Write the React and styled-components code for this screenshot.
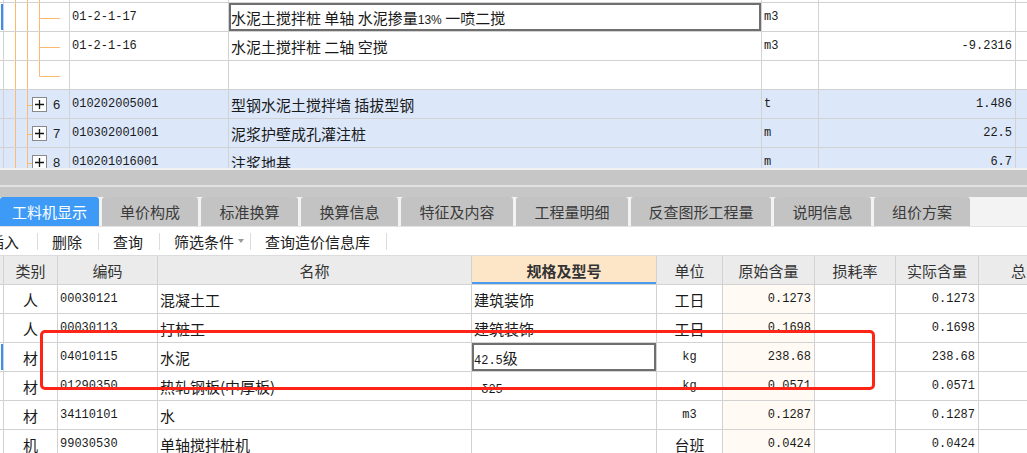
import React from "react";
import styled, { createGlobalStyle } from "styled-components";

const Global = createGlobalStyle`
  html, body { margin: 0; padding: 0; background: #fff; overflow: hidden; }
  body { font-family: "Noto Sans CJK SC", "Liberation Sans", sans-serif; }
`;

const CJK = `"Noto Sans CJK SC", "Liberation Sans", sans-serif`;
const SANS = `"Liberation Sans", "Noto Sans CJK SC", sans-serif`;
const MONO = `"Liberation Mono", "Noto Sans CJK SC", monospace`;
const LINE = "#d2d2d2";

const Page = styled.div`
  width: 1027px;
  height: 453px;
  overflow: hidden;
  position: relative;
  display: flex;
  flex-direction: column;
  background: #fff;
`;

/* ---------- top grid ---------- */
const TopGrid = styled.div`
  height: 168px;
  overflow: hidden;
  flex: none;
`;

const Row = styled.div`
  display: flex;
  height: ${(p) => p.$h}px;
  box-sizing: border-box;
  border-bottom: 1px solid ${LINE};
  background: ${(p) => (p.$blue ? "#dce8fa" : "#fff")};
  overflow: hidden;
  flex: none;
`;

const Cell = styled.div`
  position: relative;
  flex: none;
  width: ${(p) => p.$w}px;
  box-sizing: border-box;
  border-right: 1px solid ${(p) => (p.$noBorder ? "transparent" : LINE)};
  display: flex;
  align-items: center;
  justify-content: ${(p) =>
    p.$align === "right" ? "flex-end" : p.$align === "center" ? "center" : "flex-start"};
  padding: 0 ${(p) => (p.$align === "right" ? 3 : 0)}px 0 ${(p) => (p.$align === "left" ? 2 : 0)}px;
  white-space: pre;
  overflow: hidden;
  color: #1a1a1a;
  font-family: ${(p) => (p.$font === "mono" ? MONO : p.$font === "sans" ? SANS : CJK)};
  font-size: ${(p) => p.$size || 15}px;
  background: ${(p) => p.$bg || "transparent"};
  box-shadow: ${(p) => (p.$selected ? "inset 0 0 0 2px #6f6f6f" : "none")};
`;

const Marker = styled.div`
  flex: none;
  width: 4px;
  box-sizing: border-box;
  border-right: 1px solid ${LINE};
  display: flex;
  align-items: stretch;
  padding: 1px 0;
  &::before {
    content: "";
    display: ${(p) => (p.$on ? "block" : "none")};
    width: 2px;
    margin-left: 1px;
    background: #3a8ef0;
  }
`;

const TreeSvg = styled.svg`
  position: absolute;
  left: 0;
  top: 0;
`;

const TreeContent = styled.div`
  position: relative;
  display: flex;
  align-items: center;
  gap: 6px;
  padding-left: 28px;
  font-family: ${SANS};
  font-size: 13px;
  color: #222;
`;

const PlusBox = styled.span`
  width: 15px;
  height: 15px;
  box-sizing: border-box;
  border: 1px solid #8a8a8a;
  background: #fff;
  display: inline-flex;
  align-items: center;
  justify-content: center;
`;

const Small = styled.span`
  font-size: 12px;
  font-family: ${SANS};
`;

const Num = styled.span`
  font-family: ${MONO};
  font-size: 12px;
`;

const ORANGE = "#fbba70";

function Tree({ kind, h }) {
  const mid = Math.round(h / 2) + 0.5;
  return (
    <TreeSvg width="65" height={h} viewBox={`0 0 65 ${h}`}>
      <line x1="11.5" y1="0" x2="11.5" y2={h} stroke={ORANGE} strokeWidth="1" />
      <line x1="23.5" y1="0" x2="23.5" y2={h} stroke={ORANGE} strokeWidth="1" />
      {kind === "child" && (
        <>
          <line x1="35.5" y1="0" x2="35.5" y2={h} stroke={ORANGE} strokeWidth="1" />
          <line x1="35.5" y1={mid} x2="56" y2={mid} stroke={ORANGE} strokeWidth="1" />
        </>
      )}
      {kind === "last" && (
        <>
          <line x1="35.5" y1="0" x2="35.5" y2={mid} stroke={ORANGE} strokeWidth="1" />
          <line x1="35.5" y1={mid} x2="56" y2={mid} stroke={ORANGE} strokeWidth="1" />
        </>
      )}
      {kind === "top" && <line x1="35.5" y1="0" x2="35.5" y2={h} stroke={ORANGE} strokeWidth="1" />}
      {kind === "node" && <line x1="23.5" y1={mid} x2="28" y2={mid} stroke={ORANGE} strokeWidth="1" />}
    </TreeSvg>
  );
}

function Plus() {
  return (
    <PlusBox>
      <svg width="11" height="11" viewBox="0 0 11 11">
        <path d="M5.5 1v9M1 5.5h9" stroke="#111" strokeWidth="1.3" />
      </svg>
    </PlusBox>
  );
}

const topRows = [
  { h: 3, kind: "top" },
  { h: 29, kind: "child", code: "01-2-1-17", name: "水泥土搅拌桩 单轴 水泥掺量", pct: "13%", tail: " 一喷二搅", unit: "m3", qty: "", selected: true, mark: true },
  { h: 29, kind: "child", code: "01-2-1-16", name: "水泥土搅拌桩 二轴 空搅", unit: "m3", qty: "-9.2316" },
  { h: 29, kind: "last", code: "", name: "", unit: "", qty: "" },
  { h: 29, kind: "node", blue: true, num: "6", code: "010202005001", name: "型钢水泥土搅拌墙 插拔型钢", unit: "t", qty: "1.486" },
  { h: 29, kind: "node", blue: true, num: "7", code: "010302001001", name: "泥浆护壁成孔灌注桩", unit: "m", qty: "22.5" },
  { h: 29, kind: "node", blue: true, num: "8", code: "010201016001", name: "注浆地基", unit: "m", qty: "6.7" },
];

/* ---------- bottom panel ---------- */
const Splitter = styled.div`
  flex: none;
  height: 29px;
  box-sizing: border-box;
  border-top: 2px solid #f2f2f2;
  background: linear-gradient(#c6c6c6 0 15px, #e2e2e2 15px 17px, #c6c6c6 17px);
`;

const TabBar = styled.div`
  flex: none;
  height: 30px;
  display: flex;
  gap: 3px;
  background: #f3f3f3;
  border-bottom: 1px solid #e2e2e2;
  box-sizing: border-box;
`;

const Tab = styled.div`
  flex: none;
  width: ${(p) => p.$w}px;
  display: flex;
  align-items: center;
  justify-content: center;
  border-radius: 3px 3px 0 0;
  background: ${(p) => (p.$active ? "#3d9bf7" : "#c3c3c3")};
  color: ${(p) => (p.$active ? "#fff" : "#3a3a3a")};
  font-family: ${CJK};
  font-size: 15px;
`;

const Toolbar = styled.div`
  flex: none;
  height: 28px;
  display: flex;
  align-items: center;
  font-family: ${CJK};
  font-size: 15px;
  color: #222;
  background: #fff;
`;

const ToolItem = styled.span`
  display: inline-flex;
  align-items: center;
  gap: 4px;
  padding: 0 ${(p) => p.$pr ?? 16}px 0 ${(p) => p.$pl ?? 14}px;
  margin-left: ${(p) => p.$offset || 0}px;
`;

const Sep = styled.span`
  width: 1px;
  height: 17px;
  background: #dcdcdc;
`;

const Caret = styled.span`
  width: 0;
  height: 0;
  border-left: 3px solid transparent;
  border-right: 3px solid transparent;
  border-top: 4px solid #9a9a9a;
`;

const HeadRow = styled.div`
  flex: none;
  display: flex;
  height: 30px;
  box-sizing: border-box;
  border-top: 1px solid #dcdcdc;
  border-bottom: 1px solid ${LINE};
  background: #ebebeb;
`;

const HeadCell = styled.div`
  flex: none;
  width: ${(p) => p.$w}px;
  box-sizing: border-box;
  border-right: 1px solid ${LINE};
  display: flex;
  align-items: center;
  justify-content: center;
  white-space: nowrap;
  overflow: hidden;
  font-family: ${CJK};
  font-size: 15px;
  font-weight: ${(p) => (p.$hl ? 700 : 400)};
  color: #333;
  background: ${(p) => (p.$hl ? "#fde6c8" : "transparent")};
  box-shadow: ${(p) => (p.$hl ? "inset 0 -2px 0 #4a9af0" : "none")};
`;

const Highlight = styled.div`
  position: absolute;
  left: 40px;
  top: 330px;
  width: 835px;
  height: 60px;
  box-sizing: border-box;
  border: 3px solid #ff2418;
  border-radius: 5px;
  pointer-events: none;
`;

const tabs = [
  ["工料机显示", 99, true],
  ["单价构成", 96],
  ["标准换算", 97],
  ["换算信息", 97],
  ["特征及内容", 112],
  ["工程量明细", 112],
  ["反查图形工程量", 140],
  ["说明信息", 97],
  ["组价方案", 96],
];

const bCols = [4, 54, 100, 314, 185, 66, 92, 81, 83, 80];
const headers = ["", "类别", "编码", "名称", "规格及型号", "单位", "原始含量", "损耗率", "实际含量", "总"];

const bRows = [
  ["人", "00030121", "混凝土工", "建筑装饰", "工日", "0.1273", "", "0.1273"],
  ["人", "00030113", "打桩工", "建筑装饰", "工日", "0.1698", "", "0.1698"],
  ["材", "04010115", "水泥", "42.5|级", "kg", "238.68", "", "238.68", true],
  ["材", "01290350", "热轧钢板(中厚板)", " δ25|", "kg", "0.0571", "", "0.0571"],
  ["材", "34110101", "水", "", "m3", "0.1287", "", "0.1287"],
  ["机", "99030530", "单轴搅拌桩机", "", "台班", "0.0424", "", "0.0424"],
];

const isAscii = (s) => /^[\x00-\x7f]*$/.test(s);

function Spec({ v }) {
  if (!v.includes("|")) return v;
  const [a, b] = v.split("|");
  return (
    <>
      <Num>{a}</Num>
      {b}
    </>
  );
}

export default function App() {
  return (
    <Page>
      <Global />
      <TopGrid>
        {topRows.map((r, i) => (
          <Row key={i} $h={r.h} $blue={r.blue}>
            <Marker $on={r.mark} />
            <Cell $w={66}>
              <Tree kind={r.kind} h={r.h} />
              {r.num && (
                <TreeContent>
                  <Plus />
                  {r.num}
                </TreeContent>
              )}
            </Cell>
            <Cell $w={159} $align="left" $font="mono" $size={12}>
              {r.code}
            </Cell>
            <Cell $w={533} $align="left" $selected={r.selected}>
              <span>
                {r.name}
                {r.pct && <Small>{r.pct}</Small>}
                {r.tail}
              </span>
            </Cell>
            <Cell $w={57} $align="left" $font="mono" $size={12}>
              {r.unit}
            </Cell>
            <Cell $w={197} $align="right" $font="mono" $size={12}>
              {r.qty}
            </Cell>
            <Cell $w={14} $noBorder />
          </Row>
        ))}
      </TopGrid>

      <Splitter />
      <TabBar>
        {tabs.map(([t, w, a]) => (
          <Tab key={t} $w={w} $active={a}>
            {t}
          </Tab>
        ))}
      </TabBar>
      <Toolbar>
        <ToolItem $offset={-11} $pl={0} $pr={18}>插入</ToolItem>
        <Sep />
        <ToolItem>删除</ToolItem>
        <Sep />
        <ToolItem>查询</ToolItem>
        <Sep />
        <ToolItem $pr={6}>
          筛选条件
          <Caret />
        </ToolItem>
        <Sep />
        <ToolItem>查询造价信息库</ToolItem>
        <Sep />
      </Toolbar>
      <HeadRow>
        {headers.map((h, i) => (
          <HeadCell key={i} $w={bCols[i]} $hl={i === 4}>
            {h}
          </HeadCell>
        ))}
      </HeadRow>
      {bRows.map((r, i) => (
        <Row key={i} $h={29}>
          <Marker $on={r[8]} />
          <Cell $w={54} $align="center">{r[0]}</Cell>
          <Cell $w={100} $align="left" $font="mono" $size={12}>{r[1]}</Cell>
          <Cell $w={314} $align="left"><span>{r[2]}</span></Cell>
          <Cell $w={185} $align="left" $selected={r[8]}>
            <span>
              <Spec v={r[3]} />
            </span>
          </Cell>
          <Cell $w={66} $align="center" $font={isAscii(r[4]) ? "mono" : undefined} $size={isAscii(r[4]) ? 12 : 15}>
            {r[4]}
          </Cell>
          <Cell $w={92} $align="right" $font="mono" $size={12} $bg="#fffaf3">{r[5]}</Cell>
          <Cell $w={81} $align="right" $font="mono" $size={12}>{r[6]}</Cell>
          <Cell $w={83} $align="right" $font="mono" $size={12}>{r[7]}</Cell>
          <Cell $w={80} />
        </Row>
      ))}
      <Highlight />
    </Page>
  );
}
